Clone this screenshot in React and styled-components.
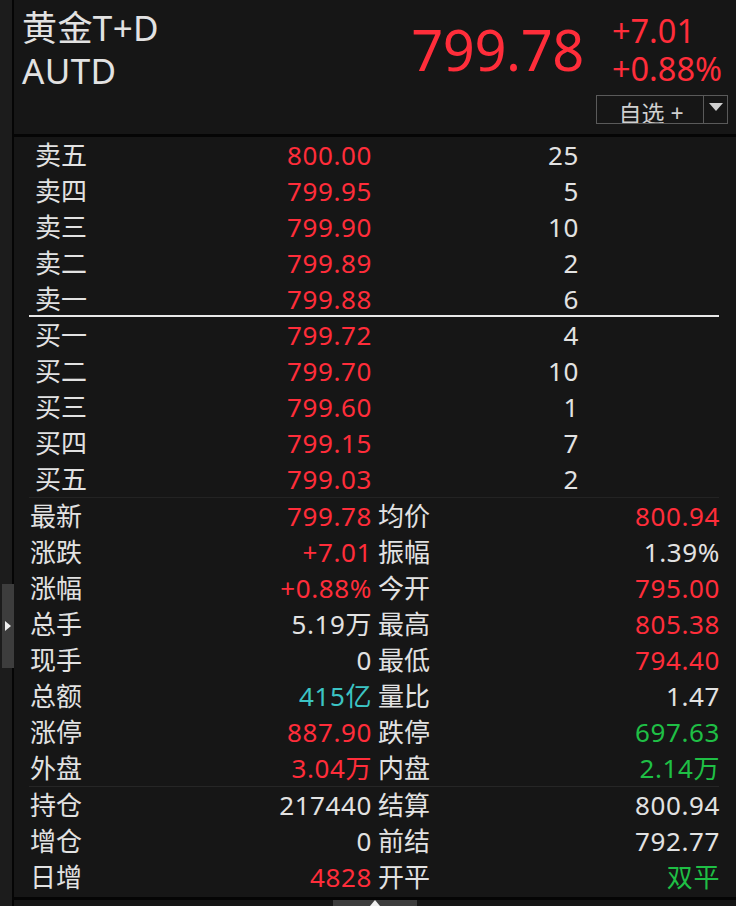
import { styled, createGlobalStyle } from "styled-components";

const GlobalStyle = createGlobalStyle`
  html, body { margin: 0; padding: 0; background: #161616; }
  body {
    font-family: "Noto Sans", "Noto Sans CJK SC", sans-serif;
    color: #e2e2e2;
  }
`;

const RED = "#ff2d3a";
const GREEN = "#1fbf45";
const CYAN = "#3cc4c4";
const WHITE = "#e2e2e2";

const Page = styled.div`
  display: flex;
  width: 736px;
  height: 906px;
  overflow: hidden;
`;

const SideStrip = styled.div`
  width: 14px;
  flex-shrink: 0;
  background: #1c1c1c;
  border-right: 2px solid #050505;
  padding-top: 584px;
  box-sizing: border-box;
`;

const SideTab = styled.div`
  width: 12px;
  height: 84px;
  margin-left: 2px;
  background: #3d3d3d;
  display: flex;
  align-items: center;
  justify-content: center;
`;

const Main = styled.div`
  flex: 1;
  display: flex;
  flex-direction: column;
  background: #161616;
`;

const Header = styled.div`
  height: 137px;
  flex-shrink: 0;
  box-sizing: border-box;
  border-bottom: 3px solid #050505;
  display: flex;
  justify-content: space-between;
  padding: 6px 14px 0 8px;
`;

const NameBlock = styled.div`
  display: flex;
  flex-direction: column;
  font-size: 35px;
  line-height: 43px;
  letter-spacing: 0.4px;
  color: ${WHITE};
`;

const QuoteBlock = styled.div`
  display: flex;
  flex-direction: column;
  align-items: flex-end;
`;

const QuoteTop = styled.div`
  display: flex;
  align-items: flex-start;
  gap: 28px;
`;

const BigPrice = styled.div`
  font-size: 56px;
  line-height: 90px;
  color: ${RED};
  margin-top: -2px;
  letter-spacing: -0.4px;
`;

const Changes = styled.div`
  display: flex;
  flex-direction: column;
  font-size: 32.5px;
  line-height: 38px;
  color: ${RED};
  margin-top: 6px;
`;

const ButtonRow = styled.div`
  display: flex;
  margin-top: 1px;
  margin-right: -6px;
`;

const WatchButton = styled.div`
  width: 108px;
  height: 29px;
  box-sizing: border-box;
  border: 1px solid #5a5a5a;
  color: #cfcfcf;
  font-size: 23px;
  line-height: 34px;
  overflow: hidden;
  text-align: center;
  padding-left: 2px;
`;

const DropButton = styled.div`
  width: 24px;
  height: 29px;
  box-sizing: border-box;
  border: 1px solid #5a5a5a;
  border-left: none;
  display: flex;
  align-items: flex-start;
  justify-content: center;
  padding-top: 7px;
`;

const Book = styled.div`
  display: flex;
  flex-direction: column;
  margin: 0 17px 0 15px;
`;

const BookRow = styled.div`
  display: grid;
  grid-template-columns: 100px 234px 207px;
  height: 36px;
  line-height: 36px;
  font-size: 26px;
  box-sizing: border-box;
  padding-left: 6px;
  border-bottom: ${(p) => (p.$split ? "2px solid #e8e8e8" : "none")};
`;

const BookLabel = styled.span`
  color: ${WHITE};
  white-space: nowrap;
`;

const Num = styled.span`
  text-align: right;
  white-space: nowrap;
  letter-spacing: 0.6px;
  margin-right: -3px;
  color: ${(p) => p.$color || WHITE};
`;

const Stats = styled.div`
  display: flex;
  flex-direction: column;
  margin: 0 17px 0 15px;
  border-top: 1px solid #232323;
`;

const StatGroup = styled.div`
  display: flex;
  flex-direction: column;
  border-bottom: ${(p) => (p.$line ? "1px solid #262626" : "none")};
`;

const StatRow = styled.div`
  display: grid;
  grid-template-columns: 60px 279px 77px 271px;
  height: 36px;
  line-height: 36px;
  font-size: 26px;
  padding-left: 1px;
`;

const StatLabel = styled.span`
  color: ${WHITE};
  white-space: nowrap;
  padding-left: ${(p) => (p.$second ? "9px" : "0")};
`;

const Footer = styled.div`
  margin-top: auto;
  height: 6px;
  border-top: 3px solid #050505;
  display: flex;
  justify-content: center;
`;

const FooterTab = styled.div`
  width: 84px;
  height: 6px;
  background: #3d3d3d;
  display: flex;
  justify-content: center;
  overflow: hidden;
`;

const book = [
  ["卖五", "800.00", "25"],
  ["卖四", "799.95", "5"],
  ["卖三", "799.90", "10"],
  ["卖二", "799.89", "2"],
  ["卖一", "799.88", "6"],
  ["买一", "799.72", "4"],
  ["买二", "799.70", "10"],
  ["买三", "799.60", "1"],
  ["买四", "799.15", "7"],
  ["买五", "799.03", "2"],
];

const statsA = [
  ["最新", "799.78", RED, "均价", "800.94", RED],
  ["涨跌", "+7.01", RED, "振幅", "1.39%", WHITE],
  ["涨幅", "+0.88%", RED, "今开", "795.00", RED],
  ["总手", "5.19万", WHITE, "最高", "805.38", RED],
  ["现手", "0", WHITE, "最低", "794.40", RED],
  ["总额", "415亿", CYAN, "量比", "1.47", WHITE],
  ["涨停", "887.90", RED, "跌停", "697.63", GREEN],
  ["外盘", "3.04万", RED, "内盘", "2.14万", GREEN],
];

const statsB = [
  ["持仓", "217440", WHITE, "结算", "800.94", WHITE],
  ["增仓", "0", WHITE, "前结", "792.77", WHITE],
  ["日增", "4828", RED, "开平", "双平", GREEN],
];

function Stat({ row }) {
  const [l1, v1, c1, l2, v2, c2] = row;
  return (
    <StatRow>
      <StatLabel>{l1}</StatLabel>
      <Num $color={c1}>{v1}</Num>
      <StatLabel $second>{l2}</StatLabel>
      <Num $color={c2}>{v2}</Num>
    </StatRow>
  );
}

export default function App() {
  return (
    <>
      <GlobalStyle />
      <Page>
        <SideStrip>
          <SideTab>
            <svg width="6" height="10" viewBox="0 0 6 10">
              <path d="M0 0 L6 5 L0 10 Z" fill="#f0f0f0" />
            </svg>
          </SideTab>
        </SideStrip>
        <Main>
          <Header>
            <NameBlock>
              <span>黄金T+D</span>
              <span>AUTD</span>
            </NameBlock>
            <QuoteBlock>
              <QuoteTop>
                <BigPrice>799.78</BigPrice>
                <Changes>
                  <span>+7.01</span>
                  <span>+0.88%</span>
                </Changes>
              </QuoteTop>
              <ButtonRow>
                <WatchButton>自选 +</WatchButton>
                <DropButton>
                  <svg width="14" height="8" viewBox="0 0 14 8">
                    <path d="M0 0 L14 0 L7 8 Z" fill="#d0d0d0" />
                  </svg>
                </DropButton>
              </ButtonRow>
            </QuoteBlock>
          </Header>
          <Book>
            {book.map(([label, price, vol], i) => (
              <BookRow key={label} $split={i === 4}>
                <BookLabel>{label}</BookLabel>
                <Num $color={RED}>{price}</Num>
                <Num>{vol}</Num>
              </BookRow>
            ))}
          </Book>
          <Stats>
            <StatGroup $line>
              {statsA.map((r) => (
                <Stat key={r[0]} row={r} />
              ))}
            </StatGroup>
            <StatGroup>
              {statsB.map((r) => (
                <Stat key={r[0]} row={r} />
              ))}
            </StatGroup>
          </Stats>
          <Footer>
            <FooterTab>
              <svg width="10" height="6" viewBox="0 0 10 6">
                <path d="M0 6 L5 0 L10 6 Z" fill="#f0f0f0" />
              </svg>
            </FooterTab>
          </Footer>
        </Main>
      </Page>
    </>
  );
}
